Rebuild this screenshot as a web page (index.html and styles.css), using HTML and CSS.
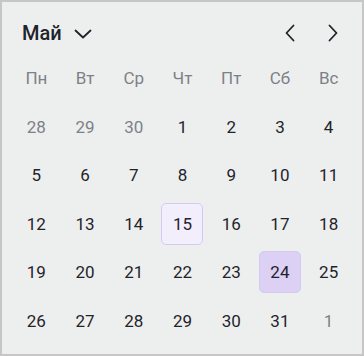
FILE: index.html
```html
<!DOCTYPE html>
<html lang="ru">
<head>
    <meta charset="UTF-8">
    <meta name="viewport" content="width=device-width, initial-scale=1.0">
    <title>Календарь</title>
    <link rel="stylesheet" href="styles.css">
</head>
<body>
    <div class="calendar">
        <div class="cal-header">
            <button class="month-btn" type="button">
                <span>Май</span>
                <svg width="18" height="10" viewBox="0 0 18 10"><path d="M1.5 1.5 L9 8.5 L16.5 1.5" fill="none" stroke="#1f232b" stroke-width="1.8" stroke-linecap="round" stroke-linejoin="round"/></svg>
            </button>
            <div class="nav">
                <button class="nav-btn" type="button" aria-label="Назад">
                    <svg width="12" height="18" viewBox="0 0 12 18"><path d="M9.5 1.5 L2.5 9 L9.5 16.5" fill="none" stroke="#1f232b" stroke-width="1.8" stroke-linecap="round" stroke-linejoin="round"/></svg>
                </button>
                <button class="nav-btn" type="button" aria-label="Вперёд">
                    <svg width="12" height="18" viewBox="0 0 12 18"><path d="M2.5 1.5 L9.5 9 L2.5 16.5" fill="none" stroke="#1f232b" stroke-width="1.8" stroke-linecap="round" stroke-linejoin="round"/></svg>
                </button>
            </div>
        </div>

        <div class="grid">
            <div class="wd">Пн</div>
            <div class="wd">Вт</div>
            <div class="wd">Ср</div>
            <div class="wd">Чт</div>
            <div class="wd">Пт</div>
            <div class="wd">Сб</div>
            <div class="wd">Вс</div>

            <div class="day muted"><span>28</span></div>
            <div class="day muted"><span>29</span></div>
            <div class="day muted"><span>30</span></div>
            <div class="day"><span>1</span></div>
            <div class="day"><span>2</span></div>
            <div class="day"><span>3</span></div>
            <div class="day"><span>4</span></div>

            <div class="day"><span>5</span></div>
            <div class="day"><span>6</span></div>
            <div class="day"><span>7</span></div>
            <div class="day"><span>8</span></div>
            <div class="day"><span>9</span></div>
            <div class="day"><span>10</span></div>
            <div class="day"><span>11</span></div>

            <div class="day"><span>12</span></div>
            <div class="day"><span>13</span></div>
            <div class="day"><span>14</span></div>
            <div class="day today"><span>15</span></div>
            <div class="day"><span>16</span></div>
            <div class="day"><span>17</span></div>
            <div class="day"><span>18</span></div>

            <div class="day"><span>19</span></div>
            <div class="day"><span>20</span></div>
            <div class="day"><span>21</span></div>
            <div class="day"><span>22</span></div>
            <div class="day"><span>23</span></div>
            <div class="day selected"><span>24</span></div>
            <div class="day"><span>25</span></div>

            <div class="day"><span>26</span></div>
            <div class="day"><span>27</span></div>
            <div class="day"><span>28</span></div>
            <div class="day"><span>29</span></div>
            <div class="day"><span>30</span></div>
            <div class="day"><span>31</span></div>
            <div class="day muted"><span>1</span></div>
        </div>
    </div>
</body>
</html>
```

FILE: styles.css
```css
:root {
    --text-color: #1f232b;
    --muted-color: #7d8186;
    --background-color: #edefee;
    --border-color: #c6c6c6;
}

body {
    margin: 0;
    font-family: Roboto, "Noto Sans", Arial, sans-serif;
    color: var(--text-color);
}

button {
    font-family: inherit;
    background: none;
    border: none;
    padding: 0;
    color: inherit;
    cursor: pointer;
}

.calendar {
    width: 364px;
    height: 356px;
    box-sizing: border-box;
    border: 2px solid var(--border-color);
    background-color: var(--background-color);
    padding: 10px 9px 0 10px;
    overflow: hidden;
}

.cal-header {
    display: flex;
    align-items: center;
    justify-content: space-between;
    height: 42px;
}

.month-btn {
    display: flex;
    align-items: center;
    gap: 12px;
    padding-left: 10px;
    font-size: 20px;
    font-weight: 500;
}

.month-btn svg {
    margin-top: 1px;
}

.nav {
    display: flex;
    align-items: center;
    gap: 31px;
    padding-right: 14px;
}

.nav-btn {
    display: flex;
}

.grid {
    display: grid;
    grid-template-columns: repeat(7, 1fr);
    grid-auto-rows: 48.5px;
}

.wd {
    display: flex;
    align-items: center;
    justify-content: center;
    font-size: 17px;
    color: var(--muted-color);
}

.day {
    display: flex;
    align-items: center;
    justify-content: center;
    font-size: 17px;
}

.day span {
    display: flex;
    align-items: center;
    justify-content: center;
    width: 42px;
    height: 42px;
    box-sizing: border-box;
    border-radius: 5px;
    border: 1px solid transparent;
}

.day.muted {
    color: var(--muted-color);
}

.day.today span {
    background-color: #f3eefc;
    border-color: #d6c9f1;
}

.day.selected span {
    background-color: #dcd0f5;
    border-color: #d6c9f1;
}
```
